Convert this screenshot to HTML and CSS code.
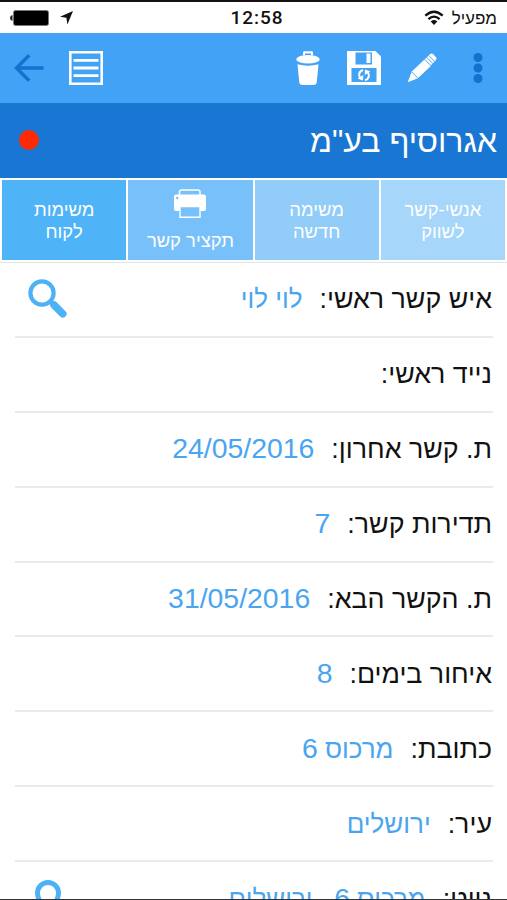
FILE: index.html
```html
<!DOCTYPE html>
<html lang="he" dir="rtl">
  <head>
    <meta charset="utf-8">
    <title>כרטיס לקוח</title>
    <link rel="stylesheet" href="styles.css">
  </head>
  <body>
    <div class="screen">
      <div class="status-bar">
        <div class="carrier">
          <span>מפעיל</span>
          <svg width="20" height="16" viewBox="0 0 20 16" fill="none" stroke="#111" stroke-width="2.3">
            <path d="M1.3 5.6Q10-2.2 18.7 5.6M4.4 9.1Q10 4.1 15.6 9.1"/>
            <path d="M6.7 11.5Q10 8.6 13.3 11.5L10 15z" fill="#111" stroke="none"/>
          </svg>
        </div>
        <div class="clock" dir="ltr">12:58</div>
        <div class="battery">
          <svg width="13" height="14" viewBox="0 0 13 14"><path d="M13 0L0 5.8L6.4 6.8L7.4 13.5z" fill="#111"/></svg>
          <svg width="39" height="16" viewBox="0 0 39 16">
            <path d="M2.5 5Q0 5.5 0 8T2.5 11z" fill="#222"/>
            <rect x="3.5" y=".5" width="35" height="15" rx="2" fill="#000" stroke="#777"/>
          </svg>
        </div>
      </div>

      <div class="toolbar">
        <svg class="icon-menu" width="10" height="30" viewBox="0 0 10 30" fill="#1173cf">
          <circle cx="5" cy="4.5" r="4.5"/><circle cx="5" cy="15" r="4.5"/><circle cx="5" cy="25.5" r="4.5"/>
        </svg>
        <svg class="icon-edit" width="30" height="30" viewBox="0 0 30 30">
          <path d="M.7 29.3L4.8 18.5L17.2 6.8L23.6 13.2L10.9 25.2z" fill="#fff"/>
          <path d="M16.8 7.2L23.2 1Q24.7 0 26.2 1.3L29 4.3Q30 5.8 28.8 7.2L22.8 13.6z" fill="#fff"/>
          <path d="M4.7 18.8L10.8 25M17.6 6.3L24.1 12.8M19.6 4.3L26.1 10.8M21.6 2.4L28 8.9" stroke="#42a2f5" stroke-width=".9"/>
        </svg>
        <svg class="icon-save" width="34" height="34" viewBox="0 0 34 34">
          <path d="M0 0H28.5L34 5.5V34H0z" fill="#fff"/>
          <path d="M8.5 1.5H25V13.5H8.5zM4.5 17H29.5V31H4.5z" fill="#42a2f5"/>
          <path d="M19.5 2.5H23.5V12H19.5z" fill="#fff"/>
          <path d="M16 19Q11 21 12.5 25.5L14 28M18 29.3Q23 27.5 21.5 22.5L20 20.5" fill="none" stroke="#fff" stroke-width="2"/>
          <path d="M10.6 27.5L16 29.5L16.3 24zM23.4 20.5L18 18.5L17.7 24z" fill="#fff"/>
        </svg>
        <svg class="icon-trash" width="24" height="34" viewBox="0 0 24 34">
          <path d="M7 4V1.5Q7 .3 8.2 .3H15.8Q17 .3 17 1.5V4" fill="#fff"/>
          <path d="M9 2.5H15V4H9z" fill="#42a2f5"/>
          <ellipse cx="12" cy="8.2" rx="11.8" ry="4.3" fill="#fff"/>
          <path d="M1.5 13.3Q12 16 22.5 13.3L20.8 31Q20.5 34 17.5 34H6.5Q3.5 34 3.2 31z" fill="#fff"/>
        </svg>
        <svg class="icon-list" width="34" height="34" viewBox="0 0 34 34" fill="none" stroke="#fff">
          <path d="M1.3 1.3H32.7V32.7H1.3z" stroke-width="2.6"/>
          <path d="M4.5 9.3H29.5M4.5 17H29.5M4.5 24.7H29.5" stroke-width="2.8"/>
        </svg>
        <svg class="icon-back" width="30" height="28" viewBox="0 0 30 28" fill="none" stroke="#1173cf" stroke-width="3.5">
          <path d="M29.5 14H2.5M15.2 1.3L2.5 14L15.2 26.7"/>
        </svg>
      </div>

      <div class="title-bar">
        <h1>אגרוסיף בע"מ</h1>
        <span class="dot"></span>
      </div>

      <div class="tabs">
        <div class="tab tab-contacts"><span>אנשי-קשר<br>לשווק</span></div>
        <div class="tab tab-new"><span>משימה<br>חדשה</span></div>
        <div class="tab tab-print">
          <svg width="32" height="30" viewBox="0 0 32 30">
            <path d="M5.5 6V3Q5.5 1 7.5 1H24Q26 1 26 3V6" fill="none" stroke="#fff" stroke-width="1.5"/>
            <path d="M2 5.5H30Q32 5.5 32 7.5V20Q32 22 30 22H2Q0 22 0 20V7.5Q0 5.5 2 5.5z" fill="#fff"/>
            <path d="M6 17.5H26V28.3H6z" fill="#78c0fa" stroke="#fff" stroke-width="1.4"/>
            <circle cx="3.2" cy="9" r="1.2" fill="#78c0fa"/>
          </svg>
          <span>תקציר קשר</span>
        </div>
        <div class="tab tab-tasks"><span>משימות<br>לקוח</span></div>
      </div>

      <div class="details">
        <div class="row">
          <span class="label">איש קשר ראשי:</span>
          <span class="value">לוי לוי</span>
          <svg class="search" width="40" height="40" viewBox="0 0 40 40" fill="none" stroke="#4db1f6">
            <circle cx="14" cy="14" r="11.6" stroke-width="4.2"/>
            <path d="M22.5 22.5L25 25" stroke-width="5"/>
            <path d="M26 26L34.8 34.8" stroke-width="7.5" stroke-linecap="round"/>
          </svg>
        </div>
        <div class="row">
          <span class="label">נייד ראשי:</span>
        </div>
        <div class="row">
          <span class="label">ת. קשר אחרון:</span>
          <span class="value"><span class="number">24/05/2016</span></span>
        </div>
        <div class="row">
          <span class="label">תדירות קשר:</span>
          <span class="value"><span class="number">7</span></span>
        </div>
        <div class="row">
          <span class="label">ת. הקשר הבא:</span>
          <span class="value"><span class="number">31/05/2016</span></span>
        </div>
        <div class="row">
          <span class="label">איחור בימים:</span>
          <span class="value"><span class="number">8</span></span>
        </div>
        <div class="row">
          <span class="label">כתובת:</span>
          <span class="value">מרכוס <span class="number">6</span></span>
        </div>
        <div class="row">
          <span class="label">עיר:</span>
          <span class="value">ירושלים</span>
        </div>
        <div class="row">
          <span class="label">נווט:</span>
          <span class="value">מרכוס <span class="number">6</span> , ירושלים</span>
          <svg class="pin" width="28" height="40" viewBox="0 0 28 40">
            <path d="M14 3.5A10.5 10.5 0 0 0 3.5 14Q3.5 21 14 37Q24.5 21 24.5 14A10.5 10.5 0 0 0 14 3.5z" fill="none" stroke="#4db1f6" stroke-width="5"/>
          </svg>
        </div>
      </div>
    </div>
  </body>
</html>
```
FILE: styles.css
```css
* {
  box-sizing: border-box;
}
body {
  margin: 0;
  background: #fff;
  font-family: "Liberation Sans", Arial, sans-serif;
  color: #111;
}
svg {
  display: block;
  flex: none;
}
.screen {
  height: 900px;
  overflow: hidden;
  border-top: 2px solid #171114;
  border-bottom: 1px solid #333;
}
.status-bar {
  display: grid;
  grid-template-columns: 1fr auto 1fr;
  align-items: center;
  height: 31px;
  padding: 0 10px;
}
.carrier {
  display: flex;
  align-items: center;
  gap: 8px;
  font-size: 17px;
}
.carrier span {
  padding-top: 2px;
}
.clock {
  padding-left: 7px;
  font-family: Roboto, sans-serif;
  font-size: 19px;
  font-weight: 500;
  letter-spacing: 1px;
}
.battery {
  display: flex;
  align-items: center;
  justify-content: flex-end;
  gap: 11px;
}
.toolbar {
  display: flex;
  align-items: center;
  height: 70px;
  padding: 0 24px 0 14px;
  background: #42a2f5;
}
.icon-edit {
  margin-right: 36px;
}
.icon-save {
  margin-right: 26px;
}
.icon-trash {
  margin-right: 27px;
}
.icon-list {
  margin-right: auto;
}
.icon-back {
  margin-right: 25px;
}
.title-bar {
  display: flex;
  align-items: center;
  justify-content: space-between;
  height: 75px;
  padding: 0 10px 1px 19px;
  background: #1976d2;
}
h1 {
  margin: 0;
  padding-top: 3px;
  color: #fff;
  font-size: 32px;
  font-weight: normal;
}
.dot {
  width: 20px;
  height: 20px;
  border-radius: 50%;
  background: #ff2a04;
}
.tabs {
  display: grid;
  grid-template-columns: repeat(4, 1fr);
  gap: 2px;
  height: 85px;
  padding: 2px 2px 2px;
  border-bottom: 1px solid #dfe4e6;
}
.tab {
  display: flex;
  flex-direction: column;
  align-items: center;
  justify-content: center;
  height: 80px;
  padding-top: 2px;
  color: #fff;
  font-size: 18.4px;
  line-height: 22px;
  text-align: center;
}
.tab-contacts {
  background: #a6d6f9;
}
.tab-new {
  background: #92ccf9;
}
.tab-print {
  gap: 11px;
  padding-top: 1px;
  background: #78c0fa;
}
.tab-tasks {
  background: #4fb3f7;
}
.details {
  padding: 0 14px 0 15px;
}
.row {
  display: flex;
  align-items: center;
  height: 74.9px;
  border-bottom: 2px solid #ebebeb;
  font-size: 26.8px;
  line-height: 32px;
  white-space: nowrap;
}
.label {
  padding-right: 1px;
  color: #111;
}
.value {
  margin-right: 17px;
  color: #4aa5f0;
  font-size: 26px;
}
.number {
  font-size: 28.4px;
  line-height: 1;
}
.search {
  margin-right: auto;
  margin-left: 13px;
}
.pin {
  margin-right: auto;
  margin-left: 19px;
}
```
